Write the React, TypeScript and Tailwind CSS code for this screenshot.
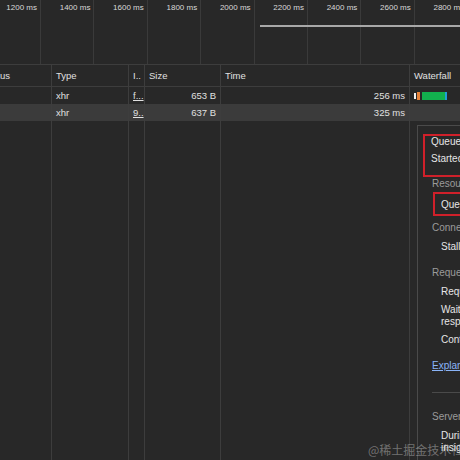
import React from 'react';

const ticks = ['1200 ms', '1400 ms', '1600 ms', '1800 ms', '2000 ms', '2200 ms', '2400 ms', '2600 ms', '2800 ms'];

const cols = 'grid grid-cols-[52px_77px_16px_76px_189px_1fr]';
const cell = 'border-r border-[#3d3d3d] px-1 overflow-hidden whitespace-nowrap';

const rows = [
  { type: 'xhr', init: 'f...', size: '653 B', time: '256 ms', bar: true, selected: false },
  { type: 'xhr', init: '9..', size: '637 B', time: '325 ms', bar: false, selected: true },
];

const Overview: React.FC = () => (
  <div className="relative h-[65px] flex border-b border-[#3d3d3d] shrink-0">
    {ticks.map((t, i) => (
      <div
        key={t}
        className={`${i === 0 ? 'w-[41px]' : 'w-[53.4px]'} shrink-0 h-full border-r border-[#3a3a3a] flex justify-end pr-[3px] pt-[3px]`}
      >
        <span className="text-[8px] leading-[10px] text-[#d8d8d8] whitespace-nowrap">{t}</span>
      </div>
    ))}
    <div className="absolute left-[260px] right-0 top-[25px] h-[2px] bg-[#a8a8a8]" />
  </div>
);

const Popup: React.FC = () => (
  <div className="absolute left-[417px] top-[125px] w-[340px] h-[400px] bg-[#282828] border border-[#4a4a4a] pl-[5px] pt-[8px] text-[10px] text-[#e6e6e6]">
    <div className="border-2 border-[#d0202a] pl-[6px] h-[43px]">
      <div className="leading-[12px] whitespace-nowrap">Queued at 0</div>
      <div className="mt-[3px] leading-[15px] whitespace-nowrap">Started at 0.81 ms</div>
    </div>
    <div className="pl-[9px] leading-[14px] text-[#9b9b9b] whitespace-nowrap">Resource Scheduling</div>
    <div className="ml-[10px] mt-[1px] border-2 border-[#d0202a] pl-[6px] h-[24px] flex items-center">
      <span className="whitespace-nowrap">Queueing</span>
    </div>
    <div className="pl-[9px] mt-[5px] leading-[14px] text-[#9b9b9b] whitespace-nowrap">Connection Start</div>
    <div className="pl-[18px] mt-[5px] leading-[14px] whitespace-nowrap">Stalled</div>
    <div className="pl-[9px] mt-[12px] leading-[14px] text-[#9b9b9b] whitespace-nowrap">Request/Response</div>
    <div className="pl-[18px] mt-[5px] leading-[14px] whitespace-nowrap">Request sent</div>
    <div className="pl-[18px] mt-[5px] leading-[12px] w-[110px]">Waiting for server response</div>
    <div className="pl-[18px] mt-[5px] leading-[14px] whitespace-nowrap">Content Download</div>
    <div className="pl-[9px] mt-[12px] leading-[14px] text-[#8ab4f8] underline whitespace-nowrap">Explanation</div>
    <div className="ml-[9px] mt-[19px] border-t border-[#4a4a4a]" />
    <div className="pl-[9px] mt-[17px] leading-[14px] text-[#9b9b9b] whitespace-nowrap">Server Timing</div>
    <div className="pl-[18px] mt-[6px] leading-[12px] whitespace-nowrap">
      <div>During development, you can use the Server Timing API to add</div>
      <div>insights into the server-side timing of this request.</div>
    </div>
  </div>
);

const App: React.FC = () => {
  return (
    <div
      className="relative w-[460px] h-[460px] overflow-hidden bg-[#282828] flex flex-col text-[#e0e0e0]"
      style={{ fontFamily: '"Liberation Sans", Arial, sans-serif' }}
    >
      <Overview />
      <div className={`${cols} h-[22px] border-b border-[#3d3d3d] text-[9.5px] leading-[21px] shrink-0`}>
        <div className={cell}><span className="-ml-[21px]">Status</span></div>
        <div className={cell}>Type</div>
        <div className={cell}>I..</div>
        <div className={cell}>Size</div>
        <div className={cell}>Time</div>
        <div className="px-1 whitespace-nowrap">Waterfall</div>
      </div>
      {rows.map((r, i) => (
        <div key={i} className={`${cols} h-[17px] text-[9.5px] leading-[17px] shrink-0 ${r.selected ? 'bg-[#3b3b3b]' : ''}`}>
          <div className={cell} />
          <div className={cell}>{r.type}</div>
          <div className={`${cell} underline`}>{r.init}</div>
          <div className={`${cell} text-right`}>{r.size}</div>
          <div className={`${cell} text-right`}>{r.time}</div>
          <div className="px-1 flex items-center">
            {r.bar && (
              <div className="flex items-center h-[8px]">
                <div className="w-[2px] h-[6px] bg-[#f2f2f2]" />
                <div className="w-[1px]" />
                <div className="w-[3px] h-[8px] bg-[#e8833a]" />
                <div className="w-[2px]" />
                <div className="w-[23px] h-[8px] bg-[#12b04e]" />
                <div className="w-[2px] h-[8px] bg-[#1f9ed8]" />
              </div>
            )}
          </div>
        </div>
      ))}
      <div className={`${cols} flex-1`}>
        <div className={cell} />
        <div className={cell} />
        <div className={cell} />
        <div className={cell} />
        <div className={cell} />
        <div />
      </div>
      <Popup />
      <div
        className="absolute left-[368px] top-[442px] text-[12px] leading-[16px] text-white/35 whitespace-nowrap"
        style={{ fontFamily: '"Noto Sans CJK SC", "Liberation Sans", sans-serif' }}
      >
        @稀土掘金技术社区
      </div>
    </div>
  );
};

export default App;
